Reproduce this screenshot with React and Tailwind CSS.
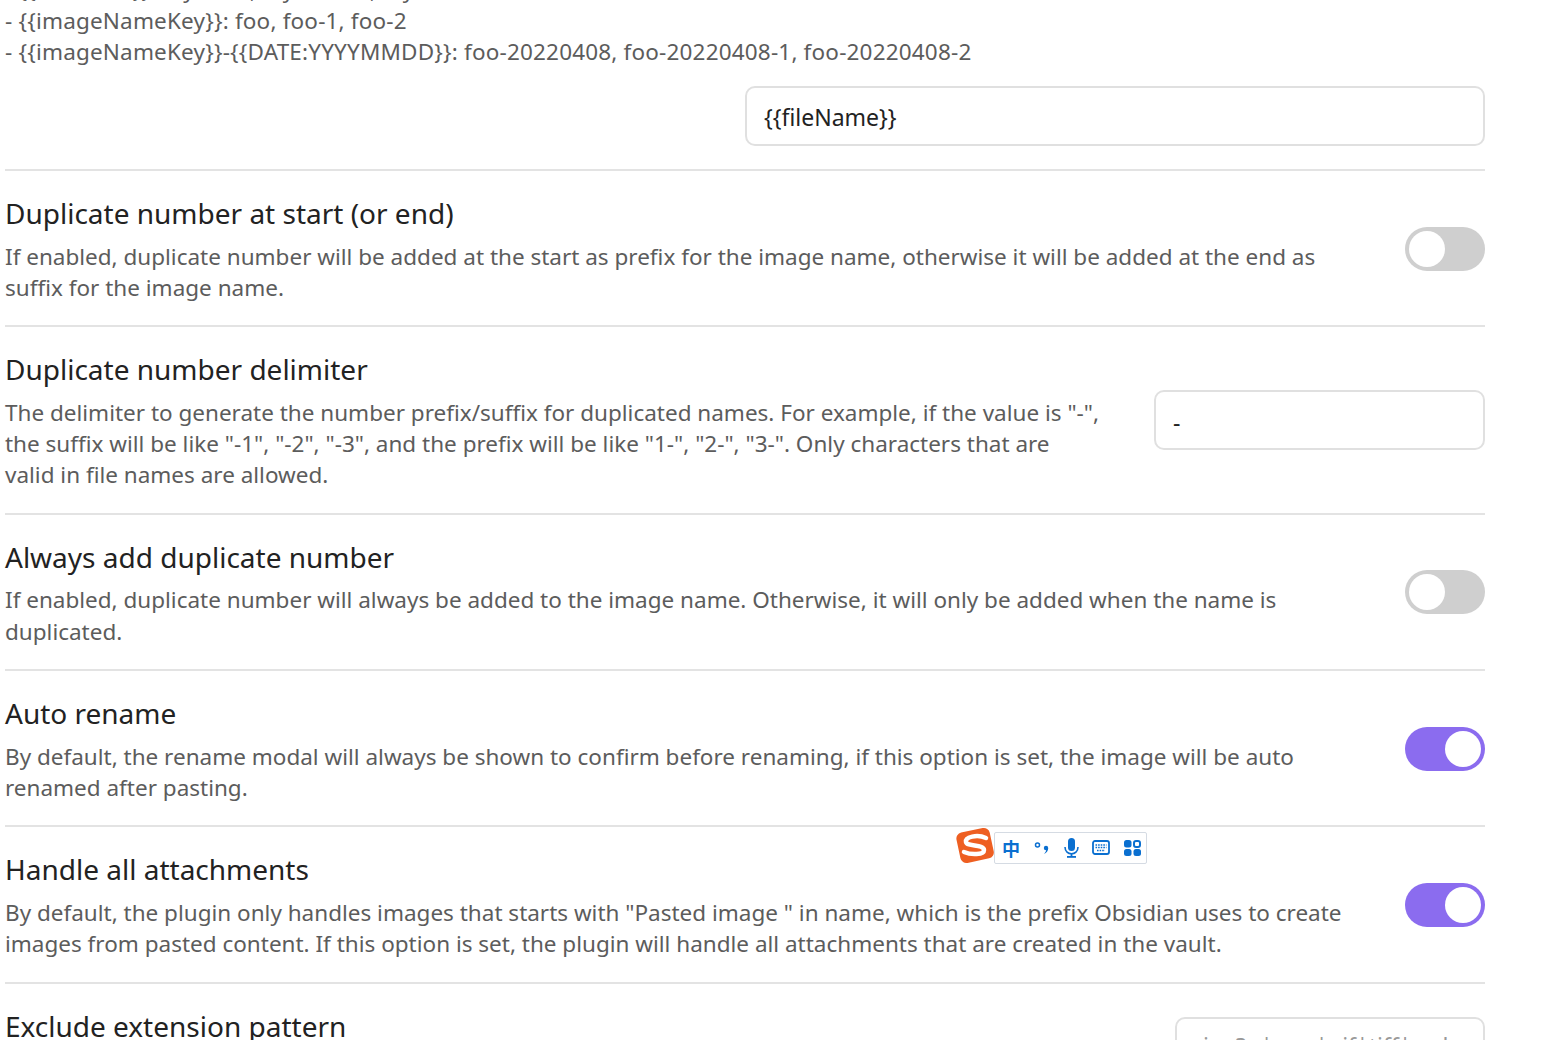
import React from 'react';

const font = "font-['Noto_Sans','Open_Sans',sans-serif]";

const Toggle = ({ on }) => (
  <div className={`flex h-[44px] w-[80px] shrink-0 items-center rounded-full p-[4px] ${on ? 'justify-end bg-[#8b6cef]' : 'justify-start bg-[#cfcfcf]'}`}>
    <div className="h-[36px] w-[36px] rounded-full bg-white" />
  </div>
);

const TextInput = ({ value, width, placeholder }) => (
  <div className={`flex h-[60px] shrink-0 items-center rounded-[10px] border-2 border-[#e0e0e0] bg-white text-[23px] ${width} ${placeholder ? 'pl-[26px] text-[#999]' : 'px-[17px] pt-[3px] text-[#222]'}`}>
    {value}
  </div>
);

const rows = [
  {
    title: 'Duplicate number at start (or end)',
    lines: [
      'If enabled, duplicate number will be added at the start as prefix for the image name, otherwise it will be added at the end as',
      'suffix for the image name.',
    ],
    control: <Toggle on={false} />,
  },
  {
    title: 'Duplicate number delimiter',
    lines: [
      'The delimiter to generate the number prefix/suffix for duplicated names. For example, if the value is "-",',
      'the suffix will be like "-1", "-2", "-3", and the prefix will be like "1-", "2-", "3-". Only characters that are',
      'valid in file names are allowed.',
    ],
    control: <TextInput value="-" width="w-[331px]" />,
  },
  {
    title: 'Always add duplicate number',
    lines: [
      'If enabled, duplicate number will always be added to the image name. Otherwise, it will only be added when the name is',
      'duplicated.',
    ],
    control: <Toggle on={false} />,
  },
  {
    title: 'Auto rename',
    lines: [
      'By default, the rename modal will always be shown to confirm before renaming, if this option is set, the image will be auto',
      'renamed after pasting.',
    ],
    control: <Toggle on />,
  },
  {
    title: 'Handle all attachments',
    lines: [
      'By default, the plugin only handles images that starts with "Pasted image " in name, which is the prefix Obsidian uses to create',
      'images from pasted content. If this option is set, the plugin will handle all attachments that are created in the vault.',
    ],
    control: <Toggle on />,
  },
];

const SettingRow = ({ title, lines, control }) => (
  <div className="flex items-center justify-between border-b-2 border-[#e3e3e3] pt-[23px] pb-[22.2px]">
    <div>
      <div className="text-[28px] leading-[38px] text-[#222]">{title}</div>
      <div className="mt-[8.5px] text-[22.5px] leading-[31.3px] text-[#5c5c5c]">
        {lines.map(l => <div key={l} className="whitespace-nowrap">{l}</div>)}
      </div>
    </div>
    {control}
  </div>
);

const ImeBar = () => (
  <div className="absolute left-[955px] top-[827px] flex items-center">
    <svg width="42" height="38" viewBox="0 0 42 38" className="relative z-10">
      <rect x="3" y="3" width="34" height="31" rx="6" fill="#ee5f22" transform="rotate(-12 20 18)" />
      <path d="M31 11 C22 7 10 10 11 15 C12 20 29 17 29 23 C29 28 16 28 9 25" fill="none" stroke="#fff" strokeWidth="4.5" strokeLinecap="round" />
    </svg>
    <div className="-ml-[3px] mt-[3px] flex h-[32px] w-[153px] items-center gap-[12px] rounded-[2px] border border-[#d5dbe3] bg-white pl-[7px] text-[#0a6fd0]">
      <span className="w-[19px] font-['Noto_Sans_CJK_SC',sans-serif] text-[18px] font-bold leading-none">中</span>
      <svg width="18" height="16" viewBox="0 0 18 16" fill="#0a6fd0">
        <circle cx="4.5" cy="5" r="2" fill="none" stroke="#0a6fd0" strokeWidth="1.5" />
        <circle cx="13" cy="8" r="2.2" />
        <path d="M13.5 8 H15.2 C15.2 11 13.5 13 11 14 C12.5 12.3 13.2 11 13.2 9.5 Z" />
      </svg>
      <svg width="17" height="20" viewBox="0 0 17 20" fill="#0a6fd0">
        <rect x="5" y="0" width="7" height="13" rx="3.5" />
        <path d="M2 9 C2 18 15 18 15 9" fill="none" stroke="#0a6fd0" strokeWidth="1.6" />
        <rect x="7.6" y="15" width="1.8" height="3" />
        <rect x="4" y="18" width="9" height="1.8" />
      </svg>
      <svg width="18" height="15" viewBox="0 0 18 15" fill="none" stroke="#0a6fd0">
        <rect x="1" y="1" width="16" height="13" rx="2" strokeWidth="1.8" />
        <path d="M3.5 5 H14.5 M3.5 7.5 H14.5 M5 10.5 H13" strokeWidth="1.6" strokeDasharray="1.6 1" />
      </svg>
      <svg width="17" height="16" viewBox="0 0 17 16" fill="#0a6fd0" className="ml-[2px]">
        <rect x="0" y="0" width="7.5" height="7.5" rx="2.5" />
        <rect x="10" y="1" width="6" height="6" rx="2" fill="none" stroke="#0a6fd0" strokeWidth="2" />
        <rect x="0" y="9" width="7.5" height="7" rx="2.5" />
        <rect x="9.5" y="9" width="7.5" height="7" rx="2.5" />
      </svg>
    </div>
  </div>
);

export default function App() {
  return (
    <div className={`relative h-[1040px] w-[1562px] overflow-hidden bg-white ${font}`}>
      <div className="-mt-[26px] ml-[5px] w-[1480px]">
        <div className="border-b-2 border-[#e3e3e3] pb-[23px]">
          <div className="text-[22.5px] leading-[31px] tracking-[0.18px] text-[#5c5c5c]">
            <div>- {'{{fileName}}'}: My note, My note-1, My note-2</div>
            <div>- {'{{imageNameKey}}'}: foo, foo-1, foo-2</div>
            <div>- {'{{imageNameKey}}-{{DATE:YYYYMMDD}}'}: foo-20220408, foo-20220408-1, foo-20220408-2</div>
          </div>
          <div className="mt-[19px] flex justify-end">
            <TextInput value="{{fileName}}" width="w-[740px]" />
          </div>
        </div>
        {rows.map(r => <SettingRow key={r.title} {...r} />)}
        <div className="flex items-start justify-between pt-[23px]">
          <div className="text-[28px] leading-[38px] text-[#222]">Exclude extension pattern</div>
          <div className="mt-[10px]">
            <TextInput value="jpe?g|png|gif|tiff|webp" width="w-[310px]" placeholder />
          </div>
        </div>
      </div>
      <ImeBar />
    </div>
  );
}
